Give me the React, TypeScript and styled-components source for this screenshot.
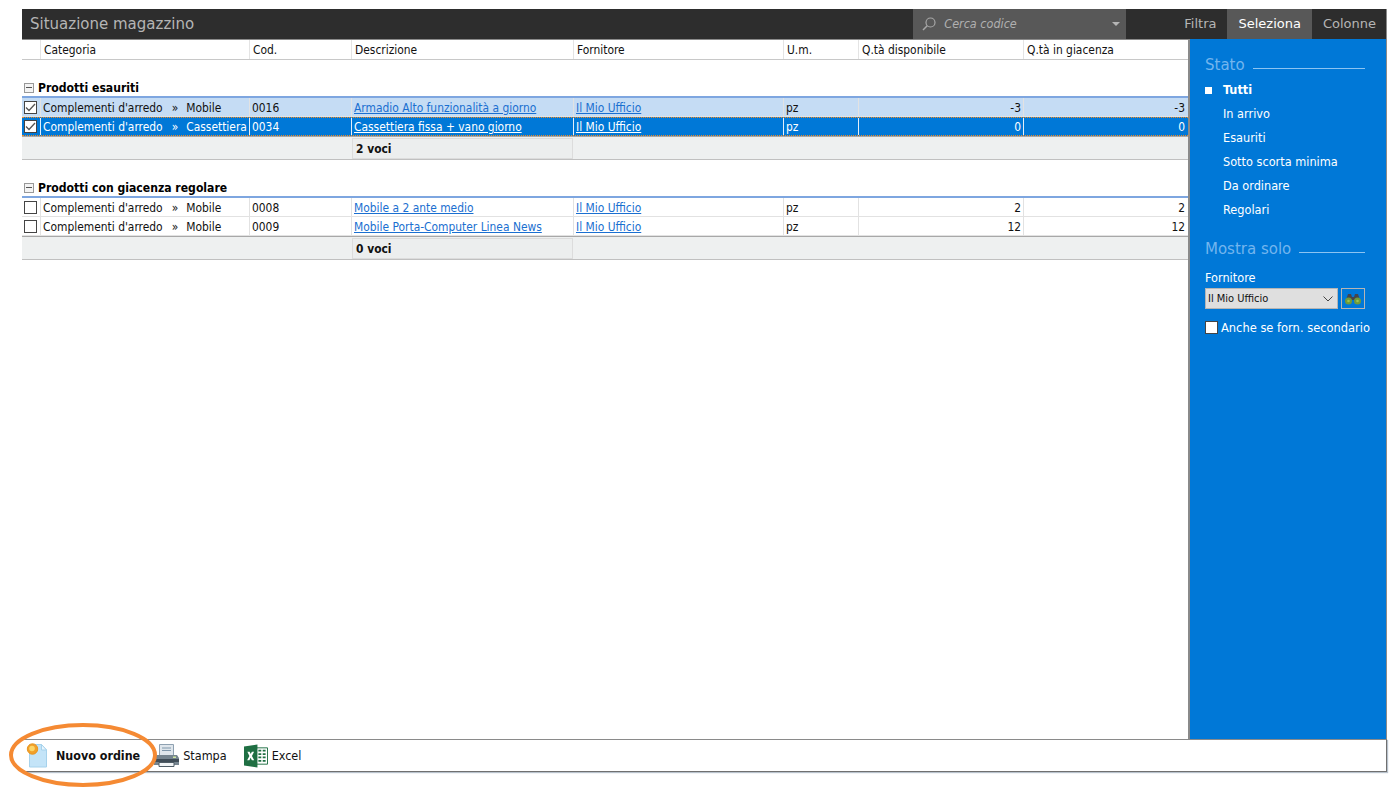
import styled, { createGlobalStyle } from "styled-components";

const GlobalStyle = createGlobalStyle`
  html, body {
    margin: 0;
    padding: 0;
    background: #fff;
  }
  body {
    font-family: "DejaVu Sans", Verdana, sans-serif;
    font-stretch: condensed;
    font-size: 11.9px;
    color: #111;
  }
`;

const COLUMNS = "19px 209px 102px 222px 210px 75px 165px 164px";

type Row = {
  checked?: boolean;
  state?: "light" | "active";
  sub: string;
  code: string;
  desc: string;
  avail: number;
  stock: number;
};

const groups: { title: string; total: string; rows: Row[] }[] = [
  {
    title: "Prodotti esauriti",
    total: "2 voci",
    rows: [
      { checked: true, state: "light", sub: "Mobile", code: "0016", desc: "Armadio Alto funzionalità a giorno", avail: -3, stock: -3 },
      { checked: true, state: "active", sub: "Cassettiera", code: "0034", desc: "Cassettiera fissa + vano giorno", avail: 0, stock: 0 },
    ],
  },
  {
    title: "Prodotti con giacenza regolare",
    total: "0 voci",
    rows: [
      { sub: "Mobile", code: "0008", desc: "Mobile a 2 ante medio", avail: 2, stock: 2 },
      { sub: "Mobile", code: "0009", desc: "Mobile Porta-Computer Linea News", avail: 12, stock: 12 },
    ],
  },
];

const stati = ["Tutti", "In arrivo", "Esauriti", "Sotto scorta minima", "Da ordinare", "Regolari"];

const SearchIcon = () => (
  <svg width="16" height="16" viewBox="0 0 16 16" fill="none" stroke="#a8a8a8" strokeWidth="1.2">
    <circle cx="9.5" cy="6.5" r="4.5" />
    <path d="M6.2 9.8 2 14" strokeWidth="1.5" />
  </svg>
);

const Tick = () => (
  <svg width="13" height="13" viewBox="0 0 13 13" fill="none" stroke="#555" strokeWidth="1.3">
    <path d="M2 6.5 5 9.5 11 3" />
  </svg>
);

const Binoculars = () => (
  <svg width="18" height="12" viewBox="0 0 18 12">
    <path d="M4 1h3l1 3h2l1-3h3l2 6H2z" fill="#45454c" />
    <circle cx="4.5" cy="8" r="3.5" fill="#6f9a3a" />
    <circle cx="13.5" cy="8" r="3.5" fill="#6f9a3a" />
    <circle cx="4.5" cy="8" r="1.3" fill="#9cc24f" />
    <circle cx="13.5" cy="8" r="1.3" fill="#9cc24f" />
  </svg>
);

const NewOrderIcon = () => (
  <svg width="22" height="25" viewBox="0 0 22 25">
    <path d="M3.5 1.5h12l5 5.5v17h-17z" fill="#c4e4f8" stroke="#a6d2ec" strokeWidth="1" />
    <path d="M15.5 1.5V7h5z" fill="#eaf6fd" stroke="#a6d2ec" strokeWidth="1" />
    <circle cx="6.5" cy="6" r="5.2" fill="#f2a02a" stroke="#e9951f" strokeWidth="1" />
    <circle cx="6" cy="5.5" r="2.8" fill="#fcd668" />
  </svg>
);

const PrinterIcon = () => (
  <svg width="25" height="24" viewBox="0 0 25 24">
    <path d="M5.5 .5h14v11h-14z" fill="#dfe6ec" stroke="#8ea1b1" strokeWidth="1" />
    <path d="M8 4h9M8 6.5h9" stroke="#7f97ab" strokeWidth="1" />
    <path d="M2 11h21l2 3v7H0v-7z" fill="#75848f" />
    <path d="M0 15h25v3H0z" fill="#3f4c57" />
    <path d="M5 18.5h15v4H5z" fill="#f1f4f6" stroke="#4f5c66" strokeWidth="1" />
    <rect x="19" y="12.5" width="3" height="1.5" fill="#cfe8a0" />
  </svg>
);

const ExcelIcon = () => (
  <svg width="24" height="24" viewBox="0 0 25 24">
    <path d="M13 3.5h11.5v17H13z" fill="#fff" stroke="#1f6f43" strokeWidth="1" />
    <path d="M15 6.5h3M19.5 6.5h3M15 10h3M19.5 10h3M15 13.5h3M19.5 13.5h3M15 17h3M19.5 17h3" stroke="#1f6f43" strokeWidth="1.8" />
    <path d="M0 2 14 0v24L0 22z" fill="#1f6f43" />
    <path d="M3.5 7.5h2.4L7 10l1.2-2.5h2.3L8.3 12l2.3 4.5H8.2L6.9 13.9 5.6 16.5H3.3L5.6 12z" fill="#fff" />
  </svg>
);

export default function App() {
  return (
    <Page>
      <GlobalStyle />
      <Window>
        <TitleBar>
          <Title>Situazione magazzino</Title>
          <SearchBox>
            <SearchIcon />
            <SearchText>Cerca codice</SearchText>
            <Caret />
          </SearchBox>
          <Tabs>
            <Tab>Filtra</Tab>
            <Tab $active>Seleziona</Tab>
            <Tab>Colonne</Tab>
          </Tabs>
        </TitleBar>
        <Body>
          <Main>
            <HeadRow>
              <HeadCell />
              <HeadCell>Categoria</HeadCell>
              <HeadCell>Cod.</HeadCell>
              <HeadCell>Descrizione</HeadCell>
              <HeadCell>Fornitore</HeadCell>
              <HeadCell>U.m.</HeadCell>
              <HeadCell>Q.tà disponibile</HeadCell>
              <HeadCell>Q.tà in giacenza</HeadCell>
            </HeadRow>
            {groups.map((g) => (
              <Group key={g.title}>
                <GroupTitle>
                  <Collapse />
                  {g.title}
                </GroupTitle>
                {g.rows.map((r) => (
                  <DataRow key={r.code} $state={r.state}>
                    <CheckCell>
                      <CheckBox>{r.checked && <Tick />}</CheckBox>
                    </CheckCell>
                    <Cell>
                      <span>Complementi d'arredo</span>
                      <Sep>»</Sep>
                      <span>{r.sub}</span>
                    </Cell>
                    <Cell>{r.code}</Cell>
                    <Cell>
                      <RowLink href="#">{r.desc}</RowLink>
                    </Cell>
                    <Cell>
                      <RowLink href="#">Il Mio Ufficio</RowLink>
                    </Cell>
                    <Cell>pz</Cell>
                    <NumCell>{r.avail}</NumCell>
                    <NumCell>{r.stock}</NumCell>
                  </DataRow>
                ))}
                <TotalRow>
                  <TotalLabel>{g.total}</TotalLabel>
                </TotalRow>
              </Group>
            ))}
          </Main>
          <Side>
            <SideTitle>Stato</SideTitle>
            <StateList>
              {stati.map((s, i) => (
                <StateItem key={s} $active={i === 0}>
                  {s}
                </StateItem>
              ))}
            </StateList>
            <SideTitle $second>Mostra solo</SideTitle>
            <FieldLabel>Fornitore</FieldLabel>
            <SelectRow>
              <SelectBox>
                Il Mio Ufficio
                <svg width="10" height="6" viewBox="0 0 10 6" fill="none" stroke="#444" strokeWidth="1">
                  <path d="M.5.5 5 5 9.5.5" />
                </svg>
              </SelectBox>
              <FindButton>
                <Binoculars />
              </FindButton>
            </SelectRow>
            <CheckLine>
              <SideCheck />
              Anche se forn. secondario
            </CheckLine>
          </Side>
        </Body>
        <BottomBar>
          <Action $bold>
            <NewOrderIcon />
            Nuovo ordine
          </Action>
          <Action>
            <PrinterIcon />
            Stampa
          </Action>
          <Action>
            <ExcelIcon />
            Excel
          </Action>
        </BottomBar>
        <Highlight width="150" height="68" viewBox="0 0 150 68">
          <ellipse cx="75" cy="34" rx="72" ry="30" fill="none" stroke="#f58a33" strokeWidth="4" />
        </Highlight>
      </Window>
    </Page>
  );
}

const Page = styled.div`
  padding: 9px 0 0 22px;
  height: 795px;
  box-sizing: border-box;
  overflow: hidden;
`;

const Window = styled.div`
  position: relative;
  width: 1365px;
  height: 763px;
  display: flex;
  flex-direction: column;
`;

const TitleBar = styled.div`
  flex: none;
  height: 30px;
  background: #2d2d2d;
  display: flex;
  align-items: stretch;
  border-right: 1px solid #8a8a8a;
`;

const Title = styled.div`
  flex: 1;
  padding-left: 8px;
  font-size: 15px;
  font-stretch: normal;
  line-height: 30px;
  color: #b5b5b5;
`;

const SearchBox = styled.div`
  width: 213px;
  background: #585858;
  display: flex;
  align-items: center;
  padding: 0 6px 1px 8px;
  box-sizing: border-box;
  gap: 7px;
`;

const SearchText = styled.span`
  flex: 1;
  font-style: italic;
  font-size: 12.5px;
  color: #b0b0b0;
`;

const Caret = styled.span`
  width: 0;
  height: 0;
  border-left: 4px solid transparent;
  border-right: 4px solid transparent;
  border-top: 4px solid #b5b5b5;
`;

const Tabs = styled.div`
  display: flex;
  margin: 0 -1px 0 47px;
`;

const Tab = styled.div<{ $active?: boolean }>`
  padding: 0 11px;
  font-size: 13px;
  font-stretch: normal;
  line-height: 29px;
  color: ${(p) => (p.$active ? "#fff" : "#b5b5b5")};
  background: ${(p) => (p.$active ? "#585858" : "transparent")};
`;

const Body = styled.div`
  flex: 1;
  display: flex;
  min-height: 0;
`;

const Main = styled.div`
  width: 1166px;
  flex: none;
  border-top: 1px solid #8a8a8a;
`;

const HeadRow = styled.div`
  display: grid;
  grid-template-columns: ${COLUMNS};
  height: 19px;
  border-bottom: 1px solid #c8c8c8;
`;

const HeadCell = styled.div`
  padding-left: 3px;
  line-height: 21px;
  border-right: 1px solid #e4e4e4;
  white-space: nowrap;
  overflow: hidden;

  &:last-child {
    border-right: 0;
  }
`;

const Group = styled.div`
  padding-top: 19px;
`;

const GroupTitle = styled.div`
  display: flex;
  align-items: center;
  height: 17px;
  font-weight: bold;
  font-size: 12.1px;
  color: #000;
  border-bottom: 2px solid #7ea6e0;
  padding-left: 2px;
`;

const Collapse = styled.span`
  position: relative;
  width: 8px;
  height: 8px;
  margin-right: 4px;
  border: 1px solid #999;
  background: #f4f4f4;

  &::after {
    content: "";
    position: absolute;
    left: 1px;
    right: 1px;
    top: 3px;
    height: 1px;
    background: #555;
  }
`;

const DataRow = styled.div<{ $state?: "light" | "active" }>`
  display: grid;
  grid-template-columns: ${COLUMNS};
  height: 18px;
  line-height: 20px;
  border-bottom: 1px solid #e2e2e2;
  background: ${(p) =>
    p.$state === "active" ? "#0078d7" : p.$state === "light" ? "#c5dcf4" : "#fff"};
  color: ${(p) => (p.$state === "active" ? "#fff" : "#111")};
  ${(p) =>
    p.$state === "active" &&
    `
    height: 17px;
    line-height: 19px;
    border-top: 1px dotted #f08a24;
    border-bottom: 1px dotted #f08a24;
    a { color: #fff; }
    > div { border-right-color: #e4eef8; }
  `}
`;

const Cell = styled.div`
  padding-left: 2px;
  border-right: 1px solid #e2e2e2;
  white-space: nowrap;
  overflow: hidden;

  &:last-child {
    border-right: 0;
  }
`;

const NumCell = styled(Cell)`
  text-align: right;
  padding: 0 2px 0 0;

  &:last-child {
    padding-right: 3px;
  }
`;

const CheckCell = styled(Cell)`
  padding: 0 0 0 2px;
  display: flex;
  align-items: center;
`;

const CheckBox = styled.span`
  display: block;
  width: 11px;
  height: 11px;
  border: 1px solid #444;
  background: #fff;

  svg {
    display: block;
    margin: -1px;
  }
`;

const Sep = styled.span`
  margin: 0 8px 0 9px;
`;

const RowLink = styled.a`
  color: #1a6fd0;
  text-decoration: underline;
`;

const TotalRow = styled.div`
  display: flex;
  height: 21px;
  padding: 1px 0 0 330px;
  background: #eef0f0;
  border-top: 1px solid #a8a8a8;
  border-bottom: 1px solid #c0c0c0;
`;

const TotalLabel = styled.div`
  width: 216px;
  height: 19px;
  padding-left: 3px;
  font-weight: bold;
  line-height: 21px;
  background: #eceeee;
  border: 1px solid #dcdcdc;
`;

const Side = styled.div`
  flex: 1;
  background: #0078d7;
  border-left: 2px solid #8a8a8a;
  border-right: 1px solid #8a8a8a;
  padding: 17px 16px 0 15px;
  color: #fff;
  min-width: 0;
`;

const SideTitle = styled.div<{ $second?: boolean }>`
  display: flex;
  align-items: center;
  font-size: 15px;
  font-stretch: normal;
  line-height: 18px;
  color: #73b5ee;
  margin-top: ${(p) => (p.$second ? "18px" : "0")};

  &::after {
    content: "";
    flex: 1;
    height: 1px;
    background: #8cc4f2;
    margin: 6px 5px 0 8px;
  }
`;

const StateList = styled.div`
  margin-top: 4px;
`;

const StateItem = styled.div<{ $active?: boolean }>`
  position: relative;
  height: 24px;
  line-height: 24px;
  padding-left: 18px;
  font-weight: ${(p) => (p.$active ? "bold" : "normal")};
  font-size: 12.6px;

  &::before {
    content: "";
    display: ${(p) => (p.$active ? "block" : "none")};
    position: absolute;
    left: 0;
    top: 9px;
    width: 7px;
    height: 7px;
    background: #fff;
  }
`;

const FieldLabel = styled.div`
  margin-top: 12px;
  font-size: 12.6px;
  line-height: 16px;
`;

const SelectRow = styled.div`
  display: flex;
  gap: 3px;
  margin-top: 2px;
`;

const SelectBox = styled.div`
  width: 125px;
  height: 19px;
  background: #dfdfdf;
  border: 1px solid #b5b5b5;
  color: #111;
  font-size: 11px;
  line-height: 19px;
  padding: 0 4px 0 2px;
  display: flex;
  align-items: center;
  justify-content: space-between;
`;

const FindButton = styled.div`
  width: 22px;
  height: 19px;
  border: 1px solid #b5b5b5;
  display: flex;
  align-items: center;
  justify-content: center;
`;

const CheckLine = styled.div`
  display: flex;
  align-items: center;
  gap: 3px;
  margin-top: 11px;
  font-size: 12.75px;
  white-space: nowrap;
`;

const SideCheck = styled.span`
  width: 11px;
  height: 11px;
  background: #fff;
  border: 1px solid #444;
  flex: none;
`;

const BottomBar = styled.div`
  flex: none;
  height: 31px;
  display: flex;
  align-items: center;
  padding-left: 4px;
  border-top: 1px solid #8a8a8a;
  border-bottom: 1px solid #707070;
  border-right: 1px solid #707070;
  box-shadow: 1px 1px 1px #b8c2cc;
`;

const Action = styled.div<{ $bold?: boolean }>`
  display: flex;
  align-items: center;
  gap: ${(p) => (p.$bold ? "8px" : "4px")};
  font-size: ${(p) => (p.$bold ? "12.4px" : "12.5px")};
  font-weight: ${(p) => (p.$bold ? "bold" : "normal")};
  color: #111;
  padding-right: ${(p) => (p.$bold ? "14px" : "17px")};
`;

const Highlight = styled.svg`
  position: absolute;
  left: -14px;
  bottom: -17px;
  pointer-events: none;
`;
